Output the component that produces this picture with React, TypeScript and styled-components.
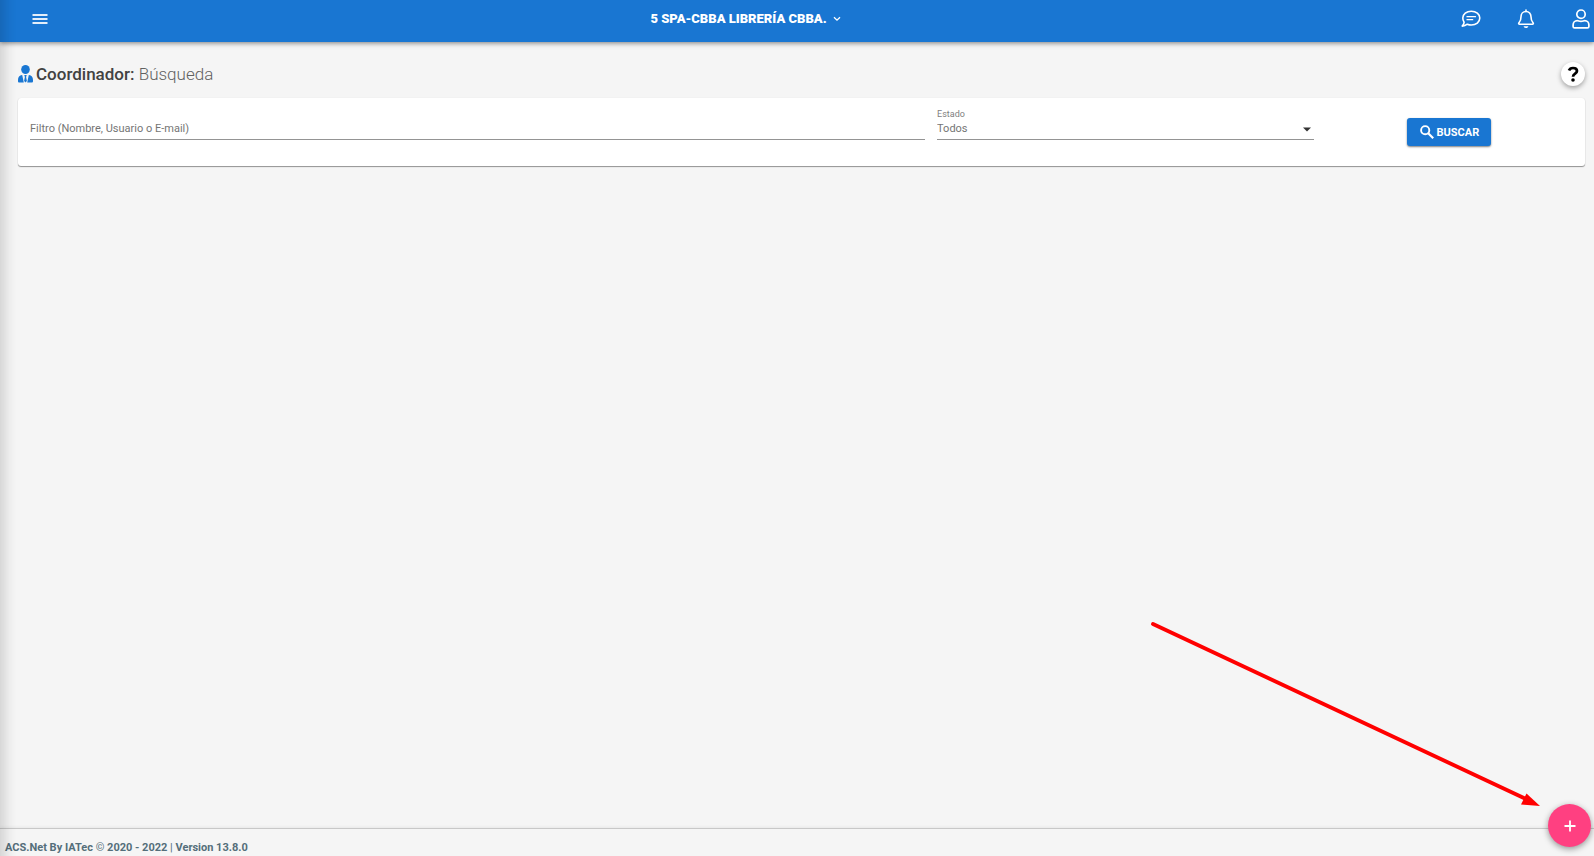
import React from "react";
import styled, { createGlobalStyle } from "styled-components";

const GlobalStyle = createGlobalStyle`
  * { box-sizing: border-box; }
  body {
    margin: 0;
    background: #f5f5f5;
    font-family: Roboto, "Liberation Sans", sans-serif;
  }
  button, input, select { font-family: inherit; }
`;

const Page = styled.div`
  display: flex;
  flex-direction: column;
  min-height: 100vh;
  overflow-x: hidden;
`;

const DrawerShadow = styled.div`
  position: fixed;
  top: 0;
  bottom: 0;
  left: 0;
  width: 16px;
  background: linear-gradient(to right, rgba(0, 0, 0, 0.12), rgba(0, 0, 0, 0.03) 60%, transparent);
  pointer-events: none;
  z-index: 3;
`;

const Header = styled.header`
  display: flex;
  align-items: center;
  height: 42px;
  padding-bottom: 4px;
  background: #1976d2;
  color: #fff;
  box-shadow: 0 1px 5px rgba(0, 0, 0, 0.5);
`;

const HeaderButton = styled.button<{ $width: number }>`
  display: flex;
  align-items: center;
  justify-content: center;
  width: ${(p) => p.$width}px;
  height: 36px;
  padding: 0;
  border: 0;
  background: none;
  color: inherit;
  cursor: pointer;
`;

const EntityArea = styled.div`
  display: flex;
  flex: 1;
  justify-content: center;
`;

const EntityButton = styled.button`
  display: flex;
  align-items: center;
  gap: 6px;
  padding: 0;
  border: 0;
  background: none;
  color: inherit;
  font-size: 13px;
  font-weight: 900;
  line-height: 20px;
  cursor: pointer;
`;

const HeaderActions = styled.div`
  display: flex;
  gap: 29px;
  padding-left: 47px;
`;

const Main = styled.main`
  flex: 1;
  padding: 18px 9px 18px 18px;
`;

const TitleRow = styled.div`
  display: flex;
  align-items: center;
  justify-content: space-between;
  height: 28px;
  margin-bottom: 10px;
`;

const Title = styled.h1`
  display: flex;
  align-items: center;
  gap: 3px;
  margin: 0;
  color: #424242;
  font-size: 17px;
  font-weight: 500;
  line-height: 24px;
`;

const Subtitle = styled.span`
  color: #616161;
  font-weight: 300;
`;

const HelpButton = styled.button`
  display: flex;
  align-items: center;
  justify-content: center;
  width: 24px;
  height: 24px;
  padding: 0;
  border: 0;
  border-radius: 50%;
  background: #fff;
  box-shadow: 0 2px 5px rgba(0, 0, 0, 0.35);
  cursor: pointer;
`;

const SearchCard = styled.form`
  display: grid;
  grid-template-columns: 7fr 3fr 2fr;
  min-height: 68px;
  padding: 11px 6px 0;
  border-radius: 3px;
  background: #fff;
  box-shadow: 0 1px 1px rgba(0, 0, 0, 0.4), 0 0 1px rgba(0, 0, 0, 0.12);
`;

const Cell = styled.div`
  display: flex;
  flex-direction: column;
  min-width: 0;
  padding: 0 6px;
`;

const Label = styled.label<{ $hidden?: boolean }>`
  height: 11px;
  color: #808080;
  font-size: 9px;
  line-height: 11px;
  visibility: ${(p) => (p.$hidden ? "hidden" : "visible")};
`;

const TextField = styled.input`
  width: 100%;
  height: 20px;
  padding: 0 0 2px;
  border: 0;
  border-bottom: 1px solid #949494;
  border-radius: 0;
  outline: 0;
  background: transparent;
  color: #757575;
  font-size: 11px;
  &::placeholder { color: #757575; opacity: 1; }
`;

const SelectWrap = styled.div`
  position: relative;
`;

const SelectField = styled.select`
  display: block;
  width: 100%;
  height: 20px;
  padding: 0 20px 2px 0;
  border: 0;
  border-bottom: 1px solid #949494;
  border-radius: 0;
  outline: 0;
  appearance: none;
  background: transparent;
  color: #757575;
  font-size: 11px;
`;

const Caret = styled.svg`
  position: absolute;
  top: 7px;
  right: 3px;
  pointer-events: none;
`;

const ButtonCell = styled.div`
  display: flex;
  align-items: flex-start;
  justify-content: center;
  padding-top: 9px;
`;

const SearchButton = styled.button`
  display: flex;
  align-items: center;
  justify-content: center;
  gap: 3px;
  width: 84px;
  height: 28px;
  padding: 0;
  border: 0;
  border-radius: 3px;
  background: #1976d2;
  box-shadow: 0 1px 2px rgba(0, 0, 0, 0.5);
  color: #fff;
  font-size: 11px;
  font-weight: 700;
  cursor: pointer;
`;

const Footer = styled.footer`
  height: 28px;
  padding: 11px 5px 0;
  border-top: 1px solid #c8c8c8;
  box-shadow: 0 -1px 3px rgba(0, 0, 0, 0.06);
  color: #546e7a;
  font-size: 11px;
  font-weight: 700;
  line-height: 16px;
`;

const Thin = styled.span`
  font-weight: 400;
`;

const AddButton = styled.button`
  position: fixed;
  right: 3px;
  bottom: 9px;
  display: flex;
  align-items: center;
  justify-content: center;
  width: 43px;
  height: 43px;
  padding: 0;
  border: 0;
  border-radius: 50%;
  background: #ff4081;
  box-shadow: 0 2px 6px rgba(0, 0, 0, 0.4);
  color: #fff;
  z-index: 4;
  cursor: pointer;
`;

const Pointer = styled.svg`
  position: fixed;
  right: 50px;
  bottom: 45px;
  pointer-events: none;
  z-index: 5;
`;

const MenuIcon = () => (
  <svg width="16" height="12" viewBox="0 0 16 12" fill="#e3eefa" aria-hidden="true">
    <rect x="0.5" y="1" width="15" height="2" />
    <rect x="0.5" y="5" width="15" height="2" />
    <rect x="0.5" y="9" width="15" height="2" />
  </svg>
);

const ChatIcon = () => (
  <svg width="20" height="18" viewBox="0 0 20 18" fill="none" stroke="#fff" strokeWidth="1.6" strokeLinecap="round" strokeLinejoin="round" aria-hidden="true">
    <path d="M10.3 1.2c4.8 0 8.500 3 8.500 6.900s-3.700 6.900-8.500 6.900c-1.500 0-2.800-.3-4-.8-1.200 1-2.900 1.900-5.100 1.900 1-1.100 1.700-2.400 1.900-3.800-.8-1.200-1.300-2.600-1.300-4.200 0-3.900 3.700-6.900 8.500-6.900z" />
    <path d="M6 6.700h8.500M6 9.700h5.700" strokeWidth="1.300" />
  </svg>
);

const BellIcon = () => (
  <svg width="18" height="20" viewBox="0 0 18 20" fill="none" stroke="#fff" strokeWidth="1.600" strokeLinecap="round" strokeLinejoin="round" aria-hidden="true">
    <path d="M9 1v1.500M9 2.500c-3 0-5 2.300-5 5.200 0 4-1.100 5-2 6-.6.700-.3 1.500.6 1.500h12.800c.9 0 1.200-.8.600-1.500-.9-1-2-2-2-6 0-2.900-2-5.200-5-5.200z" />
    <path d="M6.600 17.200h4.800c-.3 1-1.200 1.800-2.400 1.800s-2.100-.8-2.400-1.800z" fill="#fff" stroke="none" />
  </svg>
);

const UserIcon = () => (
  <svg width="18" height="20" viewBox="0 0 18 20" fill="none" stroke="#fff" strokeWidth="1.700" strokeLinejoin="round" aria-hidden="true">
    <circle cx="9" cy="5.200" r="4.200" />
    <path d="M5.300 11.700c1.200 0 1.900.6 3.700.6s2.500-.6 3.700-.6c2.400 0 4.200 1.900 4.200 4.300v1.400c0 .9-.6 1.500-1.500 1.500H2.600c-.9 0-1.500-.6-1.500-1.500V16c0-2.400 1.800-4.300 4.200-4.300z" />
  </svg>
);

const CoordinatorIcon = () => (
  <svg width="15" height="18" viewBox="0 0 15 18" fill="#1976d2" aria-hidden="true">
    <ellipse cx="7.500" cy="4.500" rx="4.300" ry="4.500" />
    <path d="M4 10c-2.500.3-4 2.200-4 5v1.200c0 .8.500 1.300 1.300 1.300h4.500L4.200 10zM11 10c2.500.3 4 2.200 4 5v1.200c0 .8-.5 1.300-1.300 1.300H9.200L10.800 10z" />
    <path d="M6.300 10h2.400l-.6 2 .8 4-1.400 1.500L6.100 16l.8-4z" />
  </svg>
);

export default function App() {
  return (
    <Page>
      <GlobalStyle />
      <DrawerShadow />
      <Header>
        <HeaderButton type="button" $width={80} aria-label="Menú"><MenuIcon /></HeaderButton>
        <EntityArea>
          <EntityButton type="button">
            5 SPA-CBBA LIBRERÍA CBBA.
            <svg width="8" height="6" viewBox="0 0 8 6" fill="none" stroke="#fff" strokeWidth="1.300" aria-hidden="true">
              <path d="M1 1.200l3 3 3-3" />
            </svg>
          </EntityButton>
        </EntityArea>
        <HeaderActions>
          <HeaderButton type="button" $width={26} aria-label="Mensajes"><ChatIcon /></HeaderButton>
          <HeaderButton type="button" $width={26} aria-label="Notificaciones"><BellIcon /></HeaderButton>
          <HeaderButton type="button" $width={26} aria-label="Usuario"><UserIcon /></HeaderButton>
        </HeaderActions>
      </Header>

      <Main>
        <TitleRow>
          <Title>
            <CoordinatorIcon />
            <span>Coordinador: <Subtitle>Búsqueda</Subtitle></span>
          </Title>
          <HelpButton type="button" aria-label="Ayuda">
            <svg width="12" height="16" viewBox="0 0 12 16" aria-hidden="true">
              <path d="M2 4.500C2.600 2.800 4 2 6 2c2.500 0 4 1.200 4 3.100C10 7.700 6 7.500 6 10.700" fill="none" stroke="#000" strokeWidth="2.700" />
              <circle cx="6" cy="14" r="1.800" />
            </svg>
          </HelpButton>
        </TitleRow>

        <SearchCard onSubmit={(e) => e.preventDefault()}>
          <Cell>
            <Label htmlFor="filter" $hidden>Filtro</Label>
            <TextField id="filter" placeholder="Filtro (Nombre, Usuario o E-mail)" />
          </Cell>
          <Cell>
            <Label htmlFor="status">Estado</Label>
            <SelectWrap>
              <SelectField id="status" defaultValue="Todos">
                <option>Todos</option>
              </SelectField>
              <Caret width="8" height="5" viewBox="0 0 8 5" aria-hidden="true">
                <path d="M0 .5h8l-4 4z" fill="#333" />
              </Caret>
            </SelectWrap>
          </Cell>
          <ButtonCell>
            <SearchButton type="submit">
              <svg width="14" height="14" viewBox="0 0 14 14" fill="none" stroke="#fff" strokeWidth="1.900" aria-hidden="true">
                <circle cx="5.200" cy="5.200" r="4.100" />
                <path d="M8.200 8.200l5 5" strokeWidth="2.200" />
              </svg>
              BUSCAR
            </SearchButton>
          </ButtonCell>
        </SearchCard>
      </Main>

      <Footer>ACS.Net By IATec <Thin>©</Thin> 2020 - 2022 <Thin>|</Thin> Version 13.8.0</Footer>

      <AddButton type="button" aria-label="Agregar">
        <svg width="12" height="12" viewBox="0 0 12 12" stroke="#fff" strokeWidth="1.800" aria-hidden="true">
          <path d="M6 .5v11M.5 6h11" />
        </svg>
      </AddButton>

      <Pointer width="394" height="190" viewBox="0 0 394 190" aria-hidden="true">
        <path d="M3 3L376 178" stroke="#f00" strokeWidth="4" strokeLinecap="round" />
        <path d="M390 185l-19-1.500 5.500-11z" fill="#f00" />
      </Pointer>
    </Page>
  );
}
